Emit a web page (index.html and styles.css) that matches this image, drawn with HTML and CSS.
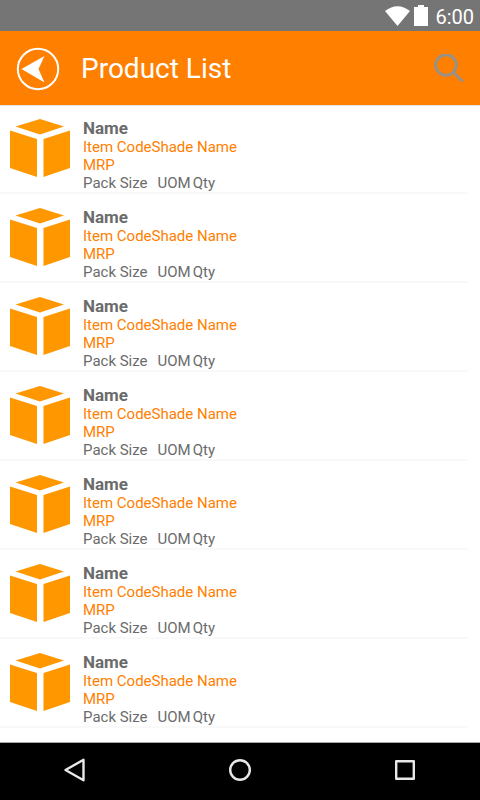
FILE: index.html
```html
<!DOCTYPE html>
<html lang="en">
<head>
<meta charset="utf-8">
<meta name="viewport" content="width=device-width, initial-scale=1">
<title>Product List</title>
<link rel="stylesheet" href="styles.css">
</head>
<body>
<svg class="defs" aria-hidden="true">
  <symbol id="box" viewBox="0 0 60 58">
    <path d="M30 0 54 7.500 30 15.500 5.500 7.500ZM0 11.500 27 20V58L0 49ZM60 11.500 33.500 20V58L60 49Z"/>
  </symbol>
</svg>
<div class="status">
  <svg class="wifi" viewBox="0 0 25 20"><path d="M0 5Q12.500-4.500 25 5L12.500 20Z"/></svg>
  <svg class="battery" viewBox="0 0 14 21"><path d="M4 0h6v2h4v19H0V2h4Z"/></svg>
  <span class="time">6:00</span>
</div>
<header class="bar">
  <button class="back" aria-label="Back">
    <svg viewBox="0 0 44 44"><circle cx="22" cy="22" r="20.200"/><path d="M5.500 22 28.500 9 22.500 22 28.500 35.500Z"/></svg>
  </button>
  <h1>Product List</h1>
  <button class="search" aria-label="Search">
    <svg viewBox="0 0 30 30"><circle cx="12" cy="11" r="10.300"/><path d="M19 18 28.500 27.500"/></svg>
  </button>
</header>
<main>
  <ul class="list">
    <li><svg class="box"><use href="#box"/></svg><div class="info"><h2>Name</h2><p class="accent">Item CodeShade Name</p><p class="accent">MRP</p><p class="pack"><span>Pack Size</span><span class="qty"><span>UOM</span><span>Qty</span></span></p></div></li>
    <li><svg class="box"><use href="#box"/></svg><div class="info"><h2>Name</h2><p class="accent">Item CodeShade Name</p><p class="accent">MRP</p><p class="pack"><span>Pack Size</span><span class="qty"><span>UOM</span><span>Qty</span></span></p></div></li>
    <li><svg class="box"><use href="#box"/></svg><div class="info"><h2>Name</h2><p class="accent">Item CodeShade Name</p><p class="accent">MRP</p><p class="pack"><span>Pack Size</span><span class="qty"><span>UOM</span><span>Qty</span></span></p></div></li>
    <li><svg class="box"><use href="#box"/></svg><div class="info"><h2>Name</h2><p class="accent">Item CodeShade Name</p><p class="accent">MRP</p><p class="pack"><span>Pack Size</span><span class="qty"><span>UOM</span><span>Qty</span></span></p></div></li>
    <li><svg class="box"><use href="#box"/></svg><div class="info"><h2>Name</h2><p class="accent">Item CodeShade Name</p><p class="accent">MRP</p><p class="pack"><span>Pack Size</span><span class="qty"><span>UOM</span><span>Qty</span></span></p></div></li>
    <li><svg class="box"><use href="#box"/></svg><div class="info"><h2>Name</h2><p class="accent">Item CodeShade Name</p><p class="accent">MRP</p><p class="pack"><span>Pack Size</span><span class="qty"><span>UOM</span><span>Qty</span></span></p></div></li>
    <li><svg class="box"><use href="#box"/></svg><div class="info"><h2>Name</h2><p class="accent">Item CodeShade Name</p><p class="accent">MRP</p><p class="pack"><span>Pack Size</span><span class="qty"><span>UOM</span><span>Qty</span></span></p></div></li>
  </ul>
</main>
<nav class="system">
  <button aria-label="Back"><svg viewBox="0 0 24 24"><path d="M20.500 1.800V22.200L2.500 12Z"/></svg></button>
  <button aria-label="Home"><svg viewBox="0 0 24 24"><circle cx="12" cy="12" r="9.800"/></svg></button>
  <button aria-label="Recent apps"><svg viewBox="0 0 24 24"><rect x="3.200" y="3.200" width="17.600" height="17.600"/></svg></button>
</nav>
</body>
</html>
```
FILE: styles.css
```css
* {
  box-sizing: border-box;
}

body {
  margin: 0;
  min-height: 100vh;
  display: flex;
  flex-direction: column;
  background: #fff;
  color: #6b6b6b;
  font-family: Roboto, sans-serif;
}

h1, h2, p, ul {
  margin: 0;
  padding: 0;
}

button {
  display: flex;
  padding: 0;
  border: 0;
  background: none;
}

svg {
  display: block;
}

.defs {
  position: absolute;
  width: 0;
  height: 0;
}

.status {
  display: flex;
  align-items: center;
  justify-content: flex-end;
  height: 31px;
  padding-right: 6px;
  background: #757575;
  color: #fff;
  fill: #fff;
}

.wifi {
  width: 25px;
  height: 20px;
  margin-right: 4px;
}

.battery {
  width: 14px;
  height: 21px;
  margin-right: 7px;
}

.time {
  padding-top: 3px;
  font-size: 20px;
  line-height: 24px;
}

.bar {
  display: flex;
  align-items: center;
  height: 75px;
  padding: 2px 16px 0;
  background: #ff8000;
  border-bottom: 1px solid #e4e4e4;
}

.bar h1 {
  flex: 1;
  margin-left: 21px;
  color: #fff;
  font-size: 28px;
  font-weight: 400;
  line-height: 36px;
}

.back svg {
  width: 44px;
  height: 44px;
  fill: #fff;
}

.back circle {
  fill: none;
  stroke: #fff;
  stroke-width: 2;
}

.search svg {
  width: 30px;
  height: 30px;
  fill: none;
  stroke: #999088;
  stroke-width: 3;
}

main {
  flex: 1;
}

.list {
  list-style: none;
  margin-right: 12px;
}

.list li {
  display: flex;
  gap: 13px;
  padding: 13px 0 0 10px;
  border-bottom: 2px solid #f9f9f9;
}

.list li:first-child {
  padding-top: 12px;
}

.box {
  width: 60px;
  height: 58px;
  margin-top: 1px;
  fill: #ff9800;
}

.info {
  font-size: 15px;
  line-height: 18px;
}

.info h2 {
  font-size: 17px;
  font-weight: 700;
  line-height: 20px;
}

.accent {
  color: #ff8000;
}

.pack {
  display: flex;
  gap: 10px;
}

.qty {
  display: flex;
  gap: 2px;
}

.system {
  display: flex;
  justify-content: space-between;
  height: 58px;
  padding: 0 63px 3px;
  background: #000;
  border-top: 1px solid #a8a8a8;
}

.system button {
  align-items: center;
}

.system svg {
  width: 24px;
  height: 24px;
  fill: none;
  stroke: #e8e8e8;
  stroke-width: 2.400;
  stroke-linejoin: round;
}
```
